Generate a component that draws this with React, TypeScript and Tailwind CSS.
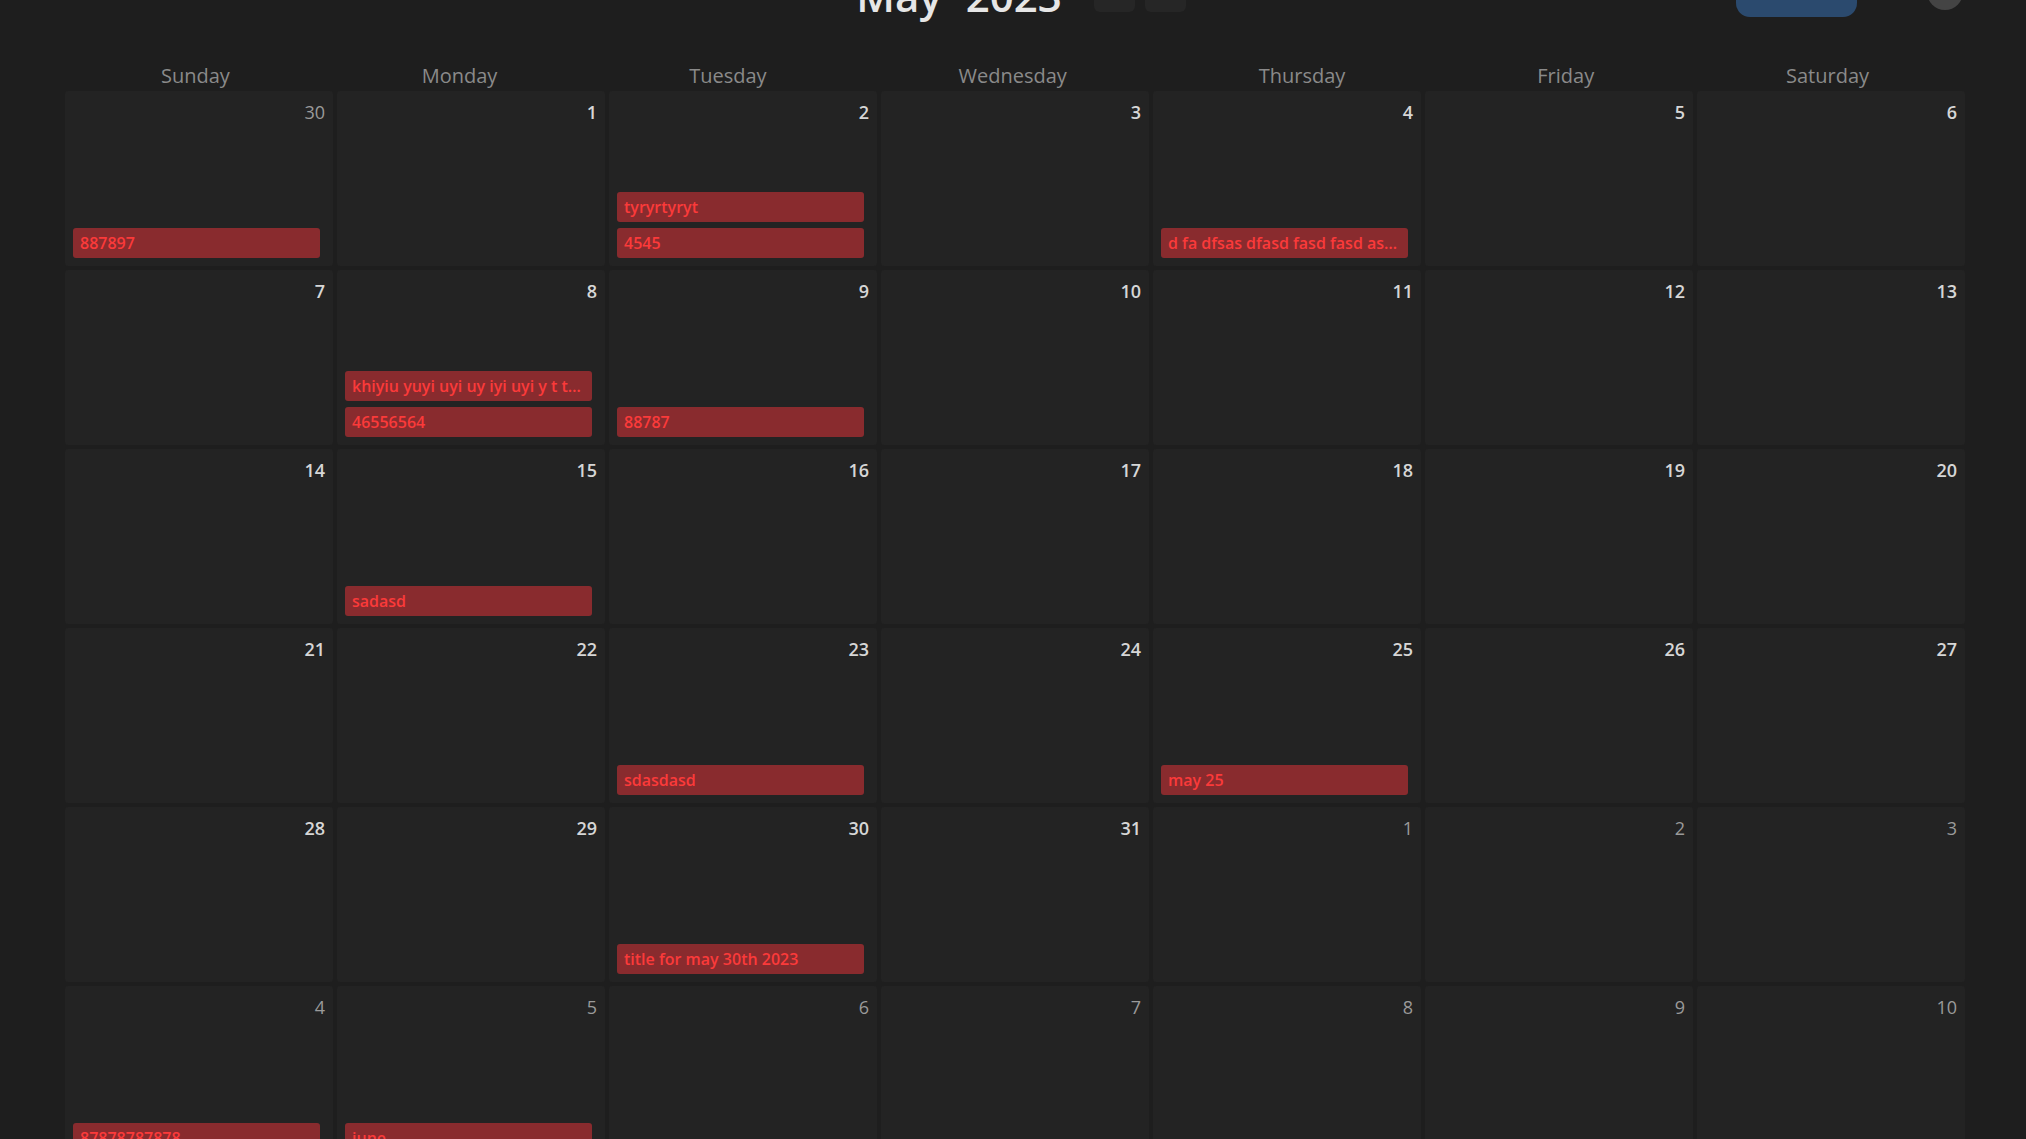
import React from "react";

type Day = { n: number; inMonth: boolean; events: string[] };

const rows: Day[][] = [
  [
    { n: 30, inMonth: false, events: ["887897"] },
    { n: 1, inMonth: true, events: [] },
    { n: 2, inMonth: true, events: ["tyryrtyryt", "4545"] },
    { n: 3, inMonth: true, events: [] },
    { n: 4, inMonth: true, events: ["d fa dfsas dfasd fasd fasd asdf asdf asdf"] },
    { n: 5, inMonth: true, events: [] },
    { n: 6, inMonth: true, events: [] },
  ],
  [
    { n: 7, inMonth: true, events: [] },
    { n: 8, inMonth: true, events: ["khiyiu yuyi uyi uy iyi uyi y t tyu tyu", "46556564"] },
    { n: 9, inMonth: true, events: ["88787"] },
    { n: 10, inMonth: true, events: [] },
    { n: 11, inMonth: true, events: [] },
    { n: 12, inMonth: true, events: [] },
    { n: 13, inMonth: true, events: [] },
  ],
  [
    { n: 14, inMonth: true, events: [] },
    { n: 15, inMonth: true, events: ["sadasd"] },
    { n: 16, inMonth: true, events: [] },
    { n: 17, inMonth: true, events: [] },
    { n: 18, inMonth: true, events: [] },
    { n: 19, inMonth: true, events: [] },
    { n: 20, inMonth: true, events: [] },
  ],
  [
    { n: 21, inMonth: true, events: [] },
    { n: 22, inMonth: true, events: [] },
    { n: 23, inMonth: true, events: ["sdasdasd"] },
    { n: 24, inMonth: true, events: [] },
    { n: 25, inMonth: true, events: ["may 25"] },
    { n: 26, inMonth: true, events: [] },
    { n: 27, inMonth: true, events: [] },
  ],
  [
    { n: 28, inMonth: true, events: [] },
    { n: 29, inMonth: true, events: [] },
    { n: 30, inMonth: true, events: ["title for may 30th 2023"] },
    { n: 31, inMonth: true, events: [] },
    { n: 1, inMonth: false, events: [] },
    { n: 2, inMonth: false, events: [] },
    { n: 3, inMonth: false, events: [] },
  ],
  [
    { n: 4, inMonth: false, events: ["87878787878"] },
    { n: 5, inMonth: false, events: ["june"] },
    { n: 6, inMonth: false, events: [] },
    { n: 7, inMonth: false, events: [] },
    { n: 8, inMonth: false, events: [] },
    { n: 9, inMonth: false, events: [] },
    { n: 10, inMonth: false, events: [] },
  ],
];

const weekdays = ["Sunday", "Monday", "Tuesday", "Wednesday", "Thursday", "Friday", "Saturday"];

function Cell({ d }: { d: Day }) {
  return (
    <div className="flex h-[175px] flex-col rounded-[3px] bg-[#232323]">
      <div
        className={
          "pr-2 pt-2 text-right text-[18px] leading-[27px] " +
          (d.inMonth ? "font-semibold text-[#d6d6d6]" : "font-normal text-[#9a9a9a]")
        }
      >
        {d.n}
      </div>
      <div className="flex flex-1 flex-col justify-end gap-[6px] pb-2 pl-2 pr-[13px]">
        {d.events.map((e, i) => (
          <div
            key={i}
            className="h-[30px] truncate rounded-[3px] bg-[#892b2e] px-[7px] text-[16px] font-semibold leading-[30px] text-[#fb3a3a]"
          >
            {e}
          </div>
        ))}
      </div>
    </div>
  );
}

export default function App() {
  return (
    <div
      className="h-screen w-full overflow-hidden bg-[#1e1e1e]"
      style={{ fontFamily: '"Open Sans", "Noto Sans", sans-serif' }}
    >
      <div className="ml-[65px] w-[1900px]">
        <div className="-mt-[40px] grid h-[101px] grid-cols-[1fr_auto_1fr] items-start">
          <div />
          <div className="flex items-start pl-[12px]">
            <div className="mt-[15px] flex gap-[24px] text-[42px] font-semibold leading-[42px] text-[#e6e6e6]">
              <span>May</span>
              <span>2023</span>
            </div>
            <div className="ml-[32px] mt-[12px] flex gap-[10px]">
              <button className="h-[40px] w-[41px] rounded-[6px] bg-[#262626]" />
              <button className="h-[40px] w-[41px] rounded-[6px] bg-[#262626]" />
            </div>
          </div>
          <div className="flex items-start justify-end">
            <button className="mt-[13px] h-[44px] w-[121px] rounded-[14px] bg-[#2b4a6e]" />
            <div className="ml-[70px] mr-[2px] mt-[14px] h-[36px] w-[36px] rounded-full bg-[#444444]" />
          </div>
        </div>
        <div className="mb-[1px] flex h-[29px] pt-[1px]">
          {weekdays.map((w) => (
            <div key={w} className="flex-auto text-center text-[20px] leading-[28px] text-[#8a8a8a]">
              {w}
            </div>
          ))}
        </div>
        <div className="flex flex-col gap-1">
          {rows.map((r, i) => (
            <div key={i} className="grid grid-cols-7 gap-1">
              {r.map((d, j) => (
                <Cell key={j} d={d} />
              ))}
            </div>
          ))}
        </div>
      </div>
    </div>
  );
}
